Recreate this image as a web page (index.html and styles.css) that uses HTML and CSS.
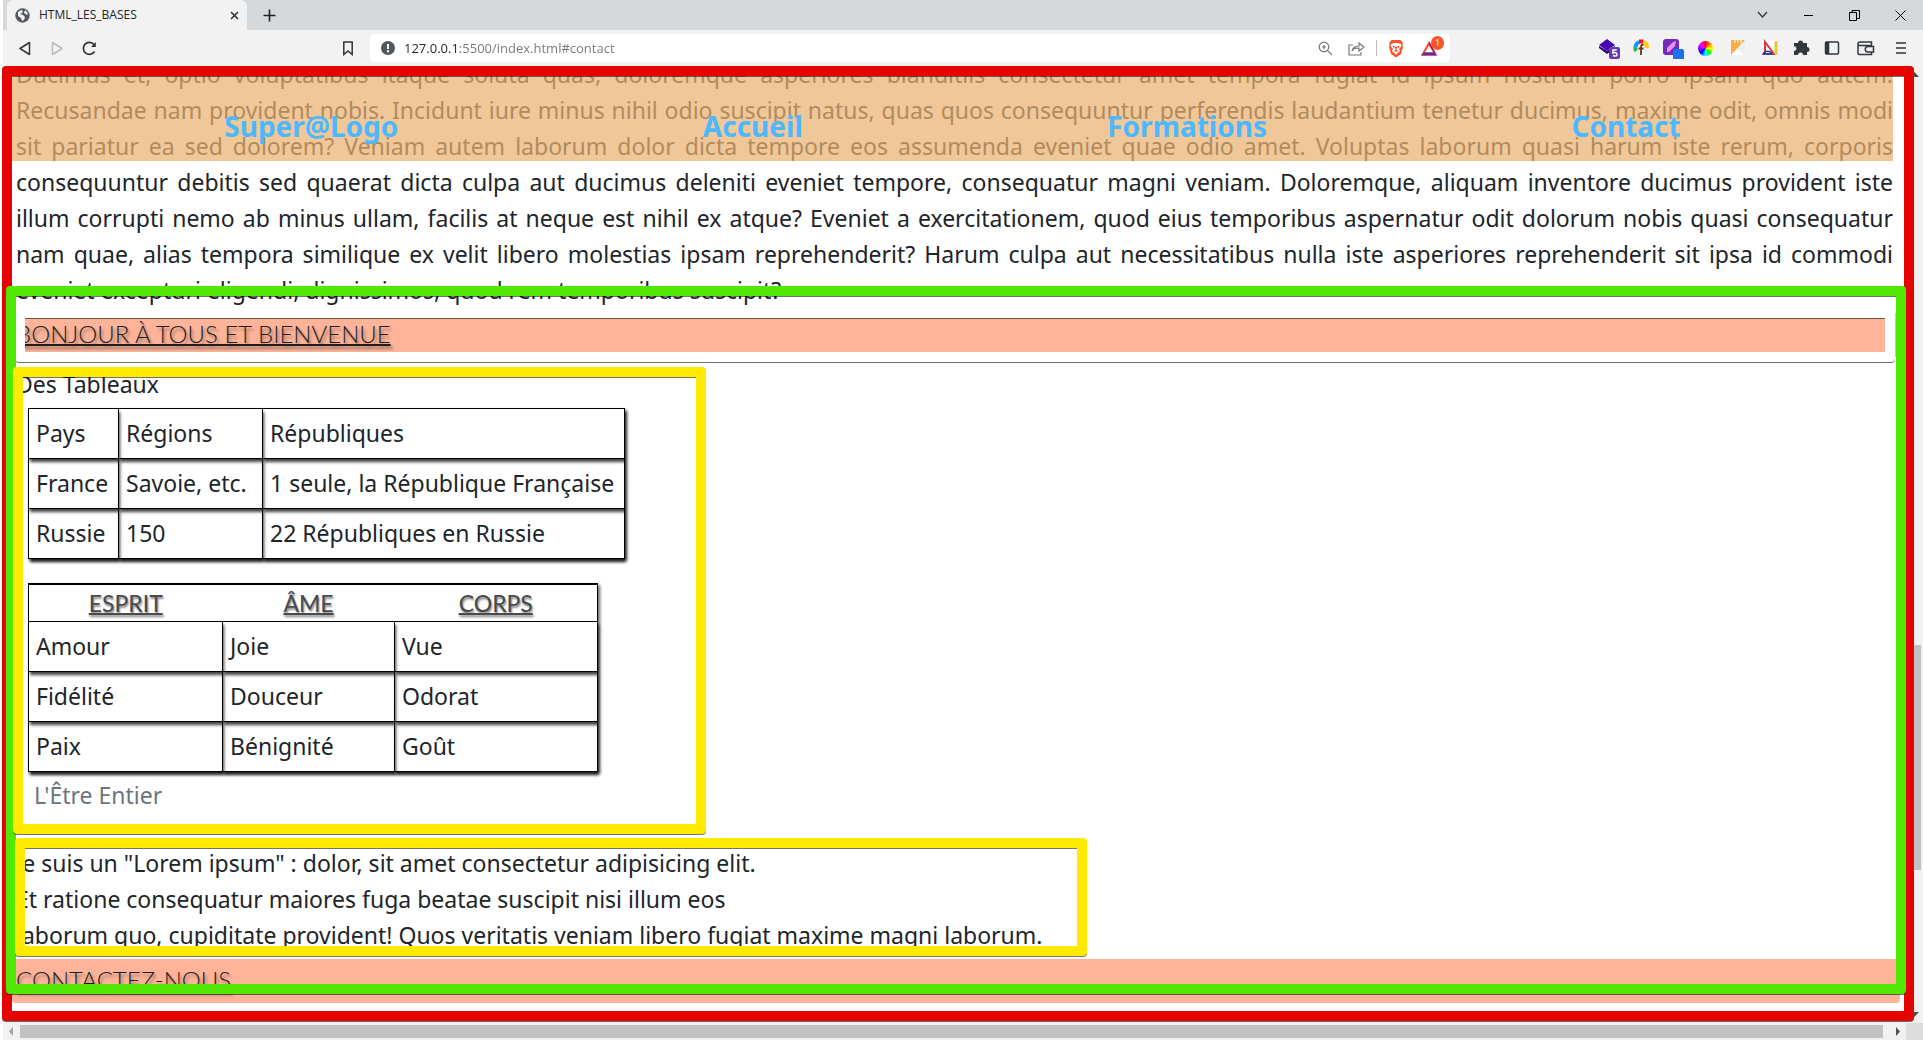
FILE: index.html
```html
<!DOCTYPE html>
<html lang="fr">
<head>
<meta charset="utf-8">
<title>HTML_LES_BASES</title>
<link rel="stylesheet" href="styles.css">
</head>
<body>
<header class="browser">
  <div class="tabstrip">
    <div class="tab">
      <svg width="15" height="15" viewBox="0 0 15 15"><circle cx="7.500" cy="7.500" r="7.200" fill="#54585d"/><path d="M3 4l3-2 2 1-1 2-2 1 3 1 2 2-1 3-2 1-1-3-3-2zM10 2l3 3-1 2-3-2z" fill="#f2f2f2"/></svg>
      <span class="tab-title">HTML_LES_BASES</span>
      <button class="icon small" aria-label="Fermer l'onglet"><svg width="9" height="9" viewBox="0 0 9 9" stroke="#333" stroke-width="1.600"><path d="M1 1l7 7M8 1l-7 7"/></svg></button>
    </div>
    <button class="icon plus" aria-label="Nouvel onglet"><svg width="13" height="13" viewBox="0 0 13 13" stroke="#222" stroke-width="1.600"><path d="M6.500 0.500v12M0.500 6.500h12"/></svg></button>
    <div class="window-controls">
      <button class="icon" aria-label="Rechercher des onglets"><svg width="11" height="8" viewBox="0 0 11 8" fill="none" stroke="#333" stroke-width="1.200"><path d="M1 1l4.500 5L10 1"/></svg></button>
      <button class="icon" aria-label="Réduire"><svg width="11" height="11" viewBox="0 0 11 11" stroke="#000"><path d="M1 5.500h9"/></svg></button>
      <button class="icon" aria-label="Restaurer"><svg width="11" height="11" viewBox="0 0 11 11" fill="none" stroke="#000"><path d="M.5 2.500h7v8h-7zM3 2.500v-2h7.500v8h-3"/></svg></button>
      <button class="icon" aria-label="Fermer"><svg width="11" height="11" viewBox="0 0 11 11" stroke="#000"><path d="M.5.5l10 10M10.500.5l-10 10"/></svg></button>
    </div>
  </div>
  <div class="toolbar">
    <div class="history">
      <button class="icon" aria-label="Précédent"><svg width="14" height="15" viewBox="0 0 14 15" fill="none" stroke="#333" stroke-width="1.500" stroke-linejoin="round"><path d="M11.500 1.500v12L2 7.500z"/></svg></button>
      <button class="icon" aria-label="Suivant"><svg width="14" height="15" viewBox="0 0 14 15" fill="none" stroke="#bbb" stroke-width="1.500" stroke-linejoin="round"><path d="M2.500 1.500v12L12 7.500z"/></svg></button>
      <button class="icon" aria-label="Actualiser"><svg width="15" height="15" viewBox="0 0 15 15" fill="none" stroke="#333" stroke-width="1.700"><path d="M12.500 10.500A6 6 0 1 1 12 3.500"/><path d="M13.800 1v5H9z" fill="#333" stroke="none"/></svg></button>
    </div>
    <button class="icon bookmark" aria-label="Ajouter aux favoris"><svg width="12" height="15" viewBox="0 0 12 15" fill="none" stroke="#333" stroke-width="1.500"><path d="M1.800 1h8.400v12.500L6 10l-4.200 3.500z"/></svg></button>
    <div class="address">
      <svg width="14" height="14" viewBox="0 0 14 14"><circle cx="7" cy="7" r="7" fill="#54585d"/><path d="M6 3h2v5H6zM6 9.300h2v2H6z" fill="#fff"/></svg>
      <input class="url" type="text" aria-label="Adresse" value="127.0.0.1:5500/index.html#contact">
      <div class="address-actions">
        <svg width="15" height="15" viewBox="0 0 15 15" fill="none" stroke="#74787c" stroke-width="1.200"><circle cx="6" cy="6" r="4.800"/><path d="M9.500 9.500l4.500 4.500M6 4v4M4 6h4"/></svg>
        <svg width="17" height="15" viewBox="0 0 17 15" fill="none" stroke="#74787c" stroke-width="1.200"><path d="M5 4H1v10h12v-3M4 10c1-4 3-5 7-5V2l5 4-5 4V7c-4 0-5 0-7 3z"/></svg>
        <span class="divider"></span>
        <svg width="16" height="19" viewBox="0 0 16 19"><path d="M3.500 1h9L15 4l-.5 2 .5 2-2 7-5 3.500L3 15 1 8l.5-2L1 4z" fill="#fb542b"/><path d="M3 5l3-1h4l3 1 .5 2-2.500 3 1 2-4 3.500L4 12l1-2-2.500-3z" fill="#fff"/><path d="M4 6.500l3 1-1 2zM12 6.500l-3 1 1 2zM7 8h2l-.5 3 1.500 1-2 1-2-1 1.500-1z" fill="#fb542b"/></svg>
        <span class="rewards">
          <svg width="18" height="17" viewBox="0 0 18 17"><path d="M9 1L1 15.500h16z" fill="#ff4724"/><path d="M1 15.500h16L13.500 12h-9z" fill="#662d91"/><path d="M9 1l8 14.500-3.500-3.500L9 5.500z" fill="#9e1f63"/><path d="M9 5.500L5 12.200h8z" fill="#fff"/></svg>
          <span class="badge">1</span>
        </span>
      </div>
    </div>
    <div class="extensions">
      <svg width="22" height="22" viewBox="0 0 22 22"><path d="M9 2l8 6-8 6-8-6z" fill="#4a00b4"/><path d="M1 9l8 5 8-5v2l-8 6-8-6z" fill="#23006b"/><rect x="11" y="10" width="11" height="12" rx="2" fill="#6638b6"/><path d="M18.800 13h-3.800v3c3-1 4 0 4 1.500s-1.500 2-4 1" fill="none" stroke="#fff" stroke-width="1.500"/></svg>
      <svg width="22" height="22" viewBox="0 0 22 22" fill="none" stroke-width="4"><path d="M6 14A6 6 0 0 1 5.500 10" stroke="#2cae58"/><path d="M5.500 10A6 6 0 0 1 9 5" stroke="#1595ff"/><path d="M9 4.500h4.500" stroke="#f01818"/><path d="M14 5a7 7 0 0 1 3 6" stroke="#ffcb00"/><path d="M13.500 8C11 7 11 9 11 11v7M8.500 11.500h5" stroke="#613b16" stroke-width="1.800"/></svg>
      <svg width="22" height="22" viewBox="0 0 22 22"><rect x="1" y="2" width="16" height="16" rx="3" fill="#742ac0"/><path d="M5 15v-4l6-6 3-1-1 5-6 6z" fill="#ef8fe3"/><rect x="11" y="12" width="11" height="11" rx="2" fill="#1a73e8"/></svg>
      <span class="wheel"></span>
      <svg width="22" height="22" viewBox="0 0 22 22"><path d="M4 3h14v15H4z" fill="#eee"/><path d="M4 3h14L4 18z" fill="#fbae48"/><path d="M8 3v3M11 3v2M14 3v3" stroke="#fff"/><path d="M4 18l6-6 8 6z" fill="#fff"/></svg>
      <svg width="22" height="22" viewBox="0 0 22 22" fill="none"><path d="M3 3h16v16H3z" fill="#fff"/><path d="M6 5v12h9z" stroke="#d9363e" stroke-width="2"/><path d="M4 17a5 5 0 0 1 9 0z" stroke="#253da0" stroke-width="1.500"/><path d="M17 4v14" stroke="#e6c33c" stroke-width="3"/></svg>
      <svg width="22" height="22" viewBox="0 0 22 22"><path d="M3 6h4a2.500 2.500 0 1 1 5 0h4v4a2.500 2.500 0 1 1 0 5v3h-4a2.500 2.500 0 0 0-5 0H3v-4a2.500 2.500 0 0 0 0-5z" fill="#33373b"/></svg>
      <svg width="22" height="22" viewBox="0 0 22 22" fill="none" stroke="#33373b" stroke-width="1.500"><rect x="2.500" y="5" width="13" height="12" rx="1"/><path d="M4.500 5v12" stroke-width="3.500"/></svg>
      <svg width="22" height="22" viewBox="0 0 22 22" fill="none" stroke="#33373b" stroke-width="1.500"><path d="M16.500 8.500V5H5a2 2 0 0 0-2 2v9a1.500 1.500 0 0 0 1.500 1.500h12V15M3.500 8.500H17M18.500 9.500V15H13a2.700 2.700 0 0 1 0-5.500z"/></svg>
      <button class="icon" aria-label="Menu"><svg width="12" height="14" viewBox="0 0 12 14" stroke="#5f6368" stroke-width="2"><path d="M1 2h10M1 7h10M1 12h10"/></svg></button>
    </div>
  </div>
</header>

<div class="workspace">
  <div class="page">
    <nav class="menu">
      <a href="#">Super@Logo</a>
      <a href="#">Accueil</a>
      <a href="#">Formations</a>
      <a href="#contact">Contact</a>
    </nav>
    <main class="content">
      <p class="lorem">
        <span>Ducimus et, optio voluptatibus itaque soluta quas, doloremque asperiores blanditiis consectetur amet tempora fugiat id ipsum nostrum porro ipsam quo autem.</span>
        <span>Recusandae nam provident nobis. Incidunt iure minus nihil odio suscipit natus, quas quos consequuntur perferendis laudantium tenetur ducimus, maxime odit, omnis modi</span>
        <span>sit pariatur ea sed dolorem? Veniam autem laborum dolor dicta tempore eos assumenda eveniet quae odio amet. Voluptas laborum quasi harum iste rerum, corporis</span>
        <span>consequuntur debitis sed quaerat dicta culpa aut ducimus deleniti eveniet tempore, consequatur magni veniam. Doloremque, aliquam inventore ducimus provident iste</span>
        <span>illum corrupti nemo ab minus ullam, facilis at neque est nihil ex atque? Eveniet a exercitationem, quod eius temporibus aspernatur odit dolorum nobis quasi consequatur</span>
        <span>nam quae, alias tempora similique ex velit libero molestias ipsam reprehenderit? Harum culpa aut necessitatibus nulla iste asperiores reprehenderit sit ipsa id commodi</span>
        <span class="last">eveniet excepturi eligendi, dignissimos, quod rem temporibus suscipit?</span>
      </p>
      <div class="lesson">
        <h2 class="banner outlined">Bonjour à tous et bienvenue</h2>
        <section class="tables">
          <p class="line">Des Tableaux</p>
          <table class="grid countries">
            <colgroup><col class="c-pays"><col class="c-regions"><col class="c-rep"></colgroup>
            <tbody>
              <tr><td>Pays</td><td>Régions</td><td>Républiques</td></tr>
              <tr><td>France</td><td>Savoie, etc.</td><td>1 seule, la République Française</td></tr>
              <tr><td>Russie</td><td>150</td><td>22 Républiques en Russie</td></tr>
            </tbody>
          </table>
          <table class="grid being">
            <caption>L'Être Entier</caption>
            <colgroup><col class="c-esprit"><col class="c-ame"><col class="c-corps"></colgroup>
            <thead><tr><th>Esprit</th><th>Âme</th><th>Corps</th></tr></thead>
            <tbody>
              <tr><td>Amour</td><td>Joie</td><td>Vue</td></tr>
              <tr><td>Fidélité</td><td>Douceur</td><td>Odorat</td></tr>
              <tr><td>Paix</td><td>Bénignité</td><td>Goût</td></tr>
            </tbody>
          </table>
        </section>
        <p class="poem">Je suis un "Lorem ipsum" : dolor, sit amet consectetur adipisicing elit.<br>Et ratione consequatur maiores fuga beatae suscipit nisi illum eos<br>laborum quo, cupiditate provident! Quos veritatis veniam libero fugiat maxime magni laborum.</p>
        <h2 class="banner" id="contact">Contactez-nous</h2>
      </div>
    </main>
  </div>
  <div class="vscroll">
    <svg class="up" width="9" height="5" viewBox="0 0 9 5"><path d="M0 5l4.500-5L9 5z" fill="#505050"/></svg>
    <div class="vthumb"></div>
    <svg width="9" height="5" viewBox="0 0 9 5"><path d="M0 0h9L4.500 5z" fill="#505050"/></svg>
  </div>
</div>
<div class="status-edge"></div>
<div class="hscroll">
  <svg width="17" height="9" viewBox="0 0 17 9"><path d="M10 0v9L6 4.500z" fill="#a3a3a3"/></svg>
  <div class="hthumb"></div>
  <svg class="right" width="23" height="9" viewBox="0 0 23 9"><path d="M13 0v9l4-4.500z" fill="#505050"/></svg>
  <div class="corner"></div>
</div>
</body>
</html>
```
FILE: styles.css
```css
* { box-sizing: border-box; }

body {
  margin: 0;
  height: 100vh;
  display: flex;
  flex-direction: column;
  overflow: hidden;
  background: #fff;
  color: #212529;
  font-family: "Comic Sans MS", "Noto Sans", sans-serif;
  font-size: 23px;
  line-height: 36px;
}

p, h2 { margin: 0; }

svg { display: block; flex: none; }

/* Browser bars */
.browser {
  padding-left: 3px;
  font-family: "Open Sans", sans-serif;
  flex: none;
}

.icon {
  display: flex;
  align-items: center;
  justify-content: center;
  border: 0;
  padding: 0;
  background: none;
}

.tabstrip {
  display: flex;
  height: 30px;
  background: #d5d9dc;
  padding-left: 4px;
}

.tab {
  display: flex;
  align-items: center;
  gap: 9px;
  width: 240px;
  padding: 0 8px;
  background: #f2f2f2;
  border-radius: 6px 6px 0 0;
  font-size: 12px;
  line-height: 20px;
}

.tab-title { flex: 1; font-family: "Open Sans", sans-serif; }
.plus { margin-left: 16px; width: 12px; }

.window-controls {
  display: flex;
  margin-left: auto;
}

.window-controls .icon { width: 46px; }

.toolbar {
  display: flex;
  align-items: center;
  height: 36px;
  background: #f2f2f2;
}

.history {
  display: flex;
  gap: 18px;
  padding-left: 15px;
}

.bookmark { margin-left: 245px; }

.address {
  display: flex;
  align-items: center;
  flex: 1;
  height: 28px;
  margin-left: 16px;
  padding: 0 6px 0 11px;
  background: #fff;
  border-radius: 4px;
}

.url {
  flex: 1;
  border: 0;
  padding: 0;
  margin-left: 9px;
  outline: 0;
  font: 13px/20px "Open Sans", sans-serif;
  background: linear-gradient(90deg, #222 56px, #74787c 56px);
  background-clip: text;
  color: transparent;
}

.address-actions {
  display: flex;
  align-items: center;
  gap: 11px;
}

.address-actions > :first-child { margin-right: 4px; }
.divider { width: 1px; height: 16px; background: #bbb; }
.rewards { position: relative; margin-left: 5px; padding-right: 6px; }

.badge {
  position: absolute;
  top: -4px;
  right: 0;
  width: 13px;
  height: 14px;
  border-radius: 7px;
  background: #fb542b;
  color: #fff;
  font-size: 9px;
  line-height: 14px;
  text-align: center;
}

.extensions {
  display: flex;
  align-items: center;
  gap: 10px;
  margin-left: 148px;
  padding-right: 16px;
}

.extensions .icon { margin-left: 8px; }

.wheel {
  width: 15px;
  height: 15px;
  margin: 0 4px;
  border-radius: 50%;
  background: conic-gradient(#f00, #f80, #ff0, #0f0, #0ff, #00f, #80f, #f0f, #f00);
}

/* Visible part of the page */
.workspace {
  position: relative;
  display: flex;
  flex: 1;
  min-height: 0;
  padding-left: 3px;
}

.page {
  position: relative;
  flex: 1;
  min-width: 0;
  overflow: hidden;
  padding: 0 6px 0 9px;
}

.menu {
  position: absolute;
  z-index: 1;
  top: 0;
  left: 9px;
  right: 13px;
  height: 95px;
  padding: 42px 60px 0;
  display: flex;
  justify-content: space-around;
  background: rgba(233, 178, 113, 0.72);
  font-size: 28px;
  font-weight: 700;
}

.menu a { color: #4db8ff; text-decoration: none; }

.content { margin-top: -10px; }
.lorem { padding: 0 7px 0 4px; }

.lorem span {
  display: block;
  white-space: nowrap;
  text-align-last: justify;
}

.lorem .last { text-align-last: left; }

.lesson {
  position: relative;
  margin-top: 5px;
}

/* Coloured outlines drawn over the page */
.workspace::after,
.lesson::after,
.outlined::after,
.tables::after,
.poem::after {
  content: "";
  position: absolute;
  border: 10px solid;
  border-radius: 4px;
  filter: drop-shadow(0 1px 0 rgba(0, 0, 0, 0.55));
  pointer-events: none;
}

.workspace::after { inset: 0 9px 0 2px; border-color: #e60400; z-index: 1; }
.lesson::after { inset: -27px -6px 9px; border-color: #53e804; z-index: 2; }
.outlined::after { inset: -5px 5px -5px 3px; border-color: #fff; z-index: 1; }
.tables::after { inset: 1px 0 11px 1px; border-color: #ffea00; z-index: 3; }
.poem::after { inset: -7px 0 -3px 3px; border-color: #ffea00; z-index: 3; }

.banner {
  position: relative;
  padding: 0 0 2px 4px;
  background: #ffb499;
  border-radius: 4px;
  color: #1c1e20;
  font-family: "Lato", sans-serif;
  font-size: 24px;
  font-weight: 300;
  line-height: 42px;
  text-transform: uppercase;
  text-decoration: underline;
  text-decoration-thickness: 2px;
  text-shadow: 2px 3px 3px rgba(0, 0, 0, 0.4);
}

.tables {
  position: relative;
  width: 694px;
  margin-top: 9px;
  padding-bottom: 32px;
}

.line { padding-left: 4px; }

.grid {
  table-layout: fixed;
  border-collapse: collapse;
  margin-left: 16px;
  border: 1px solid #000;
  box-shadow: 2px 2px 3px rgba(0, 0, 0, 0.6);
}

.grid td {
  height: 50px;
  padding: 0 7px 2px;
  border: 1px solid #000;
  box-shadow: 1px 3px 3px rgba(0, 0, 0, 0.75);
  white-space: nowrap;
}

.countries { width: 597px; margin-top: 6px; }
.c-pays { width: 90px; }
.c-regions { width: 144px; }
.being { width: 570px; margin-top: 24px; border-top-width: 2px; }
.c-esprit { width: 194px; }
.c-ame { width: 172px; }

.grid th {
  height: 36px;
  padding: 0;
  color: #484a4c;
  font-family: "Lato", sans-serif;
  font-size: 23px;
  font-weight: 400;
  text-transform: uppercase;
  text-decoration: underline;
  text-decoration-thickness: 2px;
  text-shadow: 1px 2px 2px rgba(0, 0, 0, 0.5);
}

.grid caption {
  caption-side: bottom;
  padding: 5px 6px 0;
  color: #6c757d;
  text-align: left;
}

.poem {
  position: relative;
  width: 1075px;
  padding-left: 4px;
  margin-bottom: 6px;
  white-space: nowrap;
}

/* Scroll bars */
.vscroll {
  display: flex;
  flex-direction: column;
  align-items: center;
  width: 17px;
  padding: 6px 0 4px;
  background: #f1f1f1;
}

.vthumb {
  width: 13px;
  height: 225px;
  margin: auto 0 142px;
  background: #c1c1c1;
}

.status-edge { height: 2px; margin-left: 3px; background: #f1f1f1; flex: none; }

.hscroll {
  display: flex;
  align-items: center;
  flex: none;
  height: 17px;
  margin-left: 3px;
  background: #f1f1f1;
}

.hthumb { flex: 1; height: 13px; background: #c1c1c1; }
.corner { width: 17px; height: 17px; background: #dcdcdc; }
```
